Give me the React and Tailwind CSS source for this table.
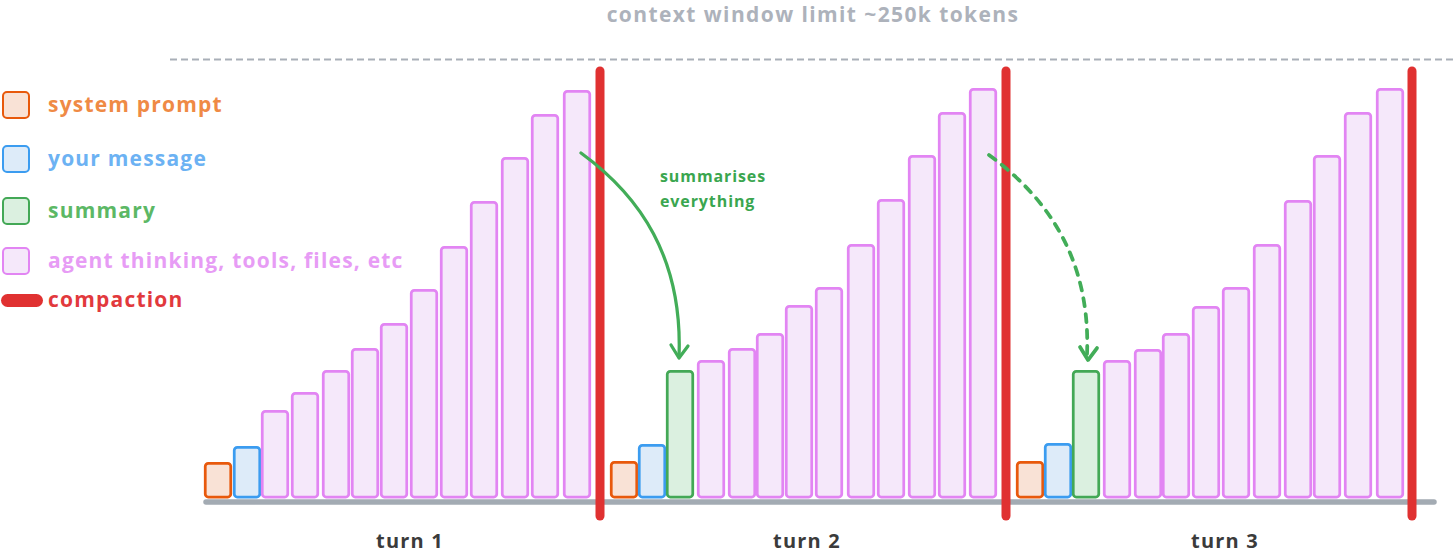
import React from 'react'

// bar tops per turn; every bar sits on the same floor
const FLOOR = 497
const W = 26

const turns = [
  {
    bars: [
      [204, 462, 'sys'], [233, 446, 'msg'],
      [261, 410], [291, 392], [322, 370], [351, 348], [380, 323],
      [410, 289], [440, 246], [470, 201], [501, 157], [531, 114], [563, 90],
    ],
  },
  {
    bars: [
      [610, 461, 'sys'], [638, 444, 'msg'], [666, 370, 'sum'],
      [697, 360], [728, 348], [756, 333], [785, 305], [815, 287],
      [847, 244], [877, 199], [908, 155], [938, 112], [969, 88],
    ],
  },
  {
    bars: [
      [1016, 461, 'sys'], [1044, 443, 'msg'], [1072, 370, 'sum'],
      [1103, 360], [1134, 349], [1162, 333], [1192, 306], [1222, 287],
      [1253, 244], [1284, 200], [1313, 155], [1344, 112], [1376, 88],
    ],
  },
]

const palette = {
  sys: { stroke: '#e8590c', fill: '#f9e2d6' },
  msg: { stroke: '#3b9cf0', fill: '#ddebf9' },
  sum: { stroke: '#43a856', fill: '#dbf0e0' },
  agent: { stroke: '#e285f3', fill: '#f5e8fa' },
}

const legend = [
  { label: 'system prompt', kind: 'sys', text: 'text-[#ef8a45]', mt: 'mt-0' },
  { label: 'your message', kind: 'msg', text: 'text-[#6cb2f3]', mt: 'mt-[26px]' },
  { label: 'summary', kind: 'sum', text: 'text-[#5cb865]', mt: 'mt-[24px]' },
  { label: 'agent thinking, tools, files, etc', kind: 'agent', text: 'text-[#e79cf5]', mt: 'mt-[22px]' },
]

const swatch = {
  sys: 'border-[#e8590c] bg-[#f9e2d6]',
  msg: 'border-[#3b9cf0] bg-[#ddebf9]',
  sum: 'border-[#43a856] bg-[#dbf0e0]',
  agent: 'border-[#e285f3] bg-[#f5e8fa]',
}

function Chart() {
  return (
    <svg className="absolute inset-0 w-full h-full" viewBox="0 0 1456 557">
      <line x1="170" y1="59.5" x2="1456" y2="59.5" stroke="#a9afb8" strokeWidth="2" strokeDasharray="7 4" />
      <line x1="206" y1="502" x2="1434" y2="502" stroke="#a3abb3" strokeWidth="5.5" strokeLinecap="round" />

      {turns.map((t, ti) =>
        t.bars.map(([x, top, kind], i) => {
          const c = palette[kind || 'agent']
          return (
            <rect
              key={`${ti}-${i}`}
              x={x + 1.25}
              y={top + 1.25}
              width={W - 0.5}
              height={FLOOR - top - 1.25}
              rx="3"
              fill={c.fill}
              stroke={c.stroke}
              strokeWidth="2.75"
            />
          )
        })
      )}

      {[600, 1006, 1412].map(x => (
        <line key={x} x1={x} y1="71" x2={x} y2="516" stroke="#e03131" strokeWidth="9" strokeLinecap="round" />
      ))}

      {/* solid arrow: turn 1 -> summary */}
      <g fill="none" stroke="#42ad58" strokeWidth="3.25" strokeLinecap="round" strokeLinejoin="round">
        <path d="M581 153 C 640 196, 683 258, 679 357" />
        <path d="M671 345 L679 358 L688 346" />
      </g>
      {/* dashed arrow: turn 2 -> summary */}
      <g fill="none" stroke="#42ad58" strokeWidth="3.75" strokeLinecap="round" strokeLinejoin="round">
        <path d="M989 155 C 1048 198, 1091 260, 1087 355" strokeDasharray="8 8" />
        <path d="M1080 347 L1088 360 L1097 348" />
      </g>

      <text x="660" y="182" fill="#3aa64f" fontSize="16" fontWeight="700" letterSpacing="0.9" className="font-['Open_Sans',sans-serif]">
        summarises
      </text>
      <text x="660" y="207" fill="#3aa64f" fontSize="16" fontWeight="700" letterSpacing="0.9" className="font-['Open_Sans',sans-serif]">
        everything
      </text>
    </svg>
  )
}

export default function App() {
  return (
    <div className="relative w-[1456px] h-[557px] bg-white overflow-hidden font-['Open_Sans',sans-serif]">
      <Chart />

      <div className="relative flex flex-col h-full">
        <div className="h-[30px] pl-[170px] flex items-center justify-center">
          <span className="text-[21px] font-bold tracking-[1.4px] text-[#adb2bb]">
            context window limit ~250k tokens
          </span>
        </div>

        <div className="mt-[61px] flex flex-col">
          {legend.map(l => (
            <div key={l.label} className={`flex items-center h-[28px] ${l.mt}`}>
              <div className={`ml-[2px] w-[28px] h-[28px] rounded-[5px] border-[2.5px] ${swatch[l.kind]}`} />
              <span className={`ml-[18px] text-[21px] font-bold tracking-[1.2px] ${l.text}`}>{l.label}</span>
            </div>
          ))}
          <div className="flex items-center h-[28px] mt-[11px]">
            <div className="ml-[1px] w-[42px] h-[13px] rounded-full bg-[#e03131]" />
            <span className="ml-[5px] text-[21px] font-bold tracking-[1.2px] text-[#e2393d]">compaction</span>
          </div>
        </div>

        <div className="mt-auto mb-[1px] h-[30px] pl-[208px] grid grid-cols-[404px_390px_446px] items-center">
          {['turn 1', 'turn 2', 'turn 3'].map(t => (
            <span key={t} className="text-center text-[20px] font-bold tracking-[1.2px] text-[#3b3b3b]">
              {t}
            </span>
          ))}
        </div>
      </div>
    </div>
  )
}
